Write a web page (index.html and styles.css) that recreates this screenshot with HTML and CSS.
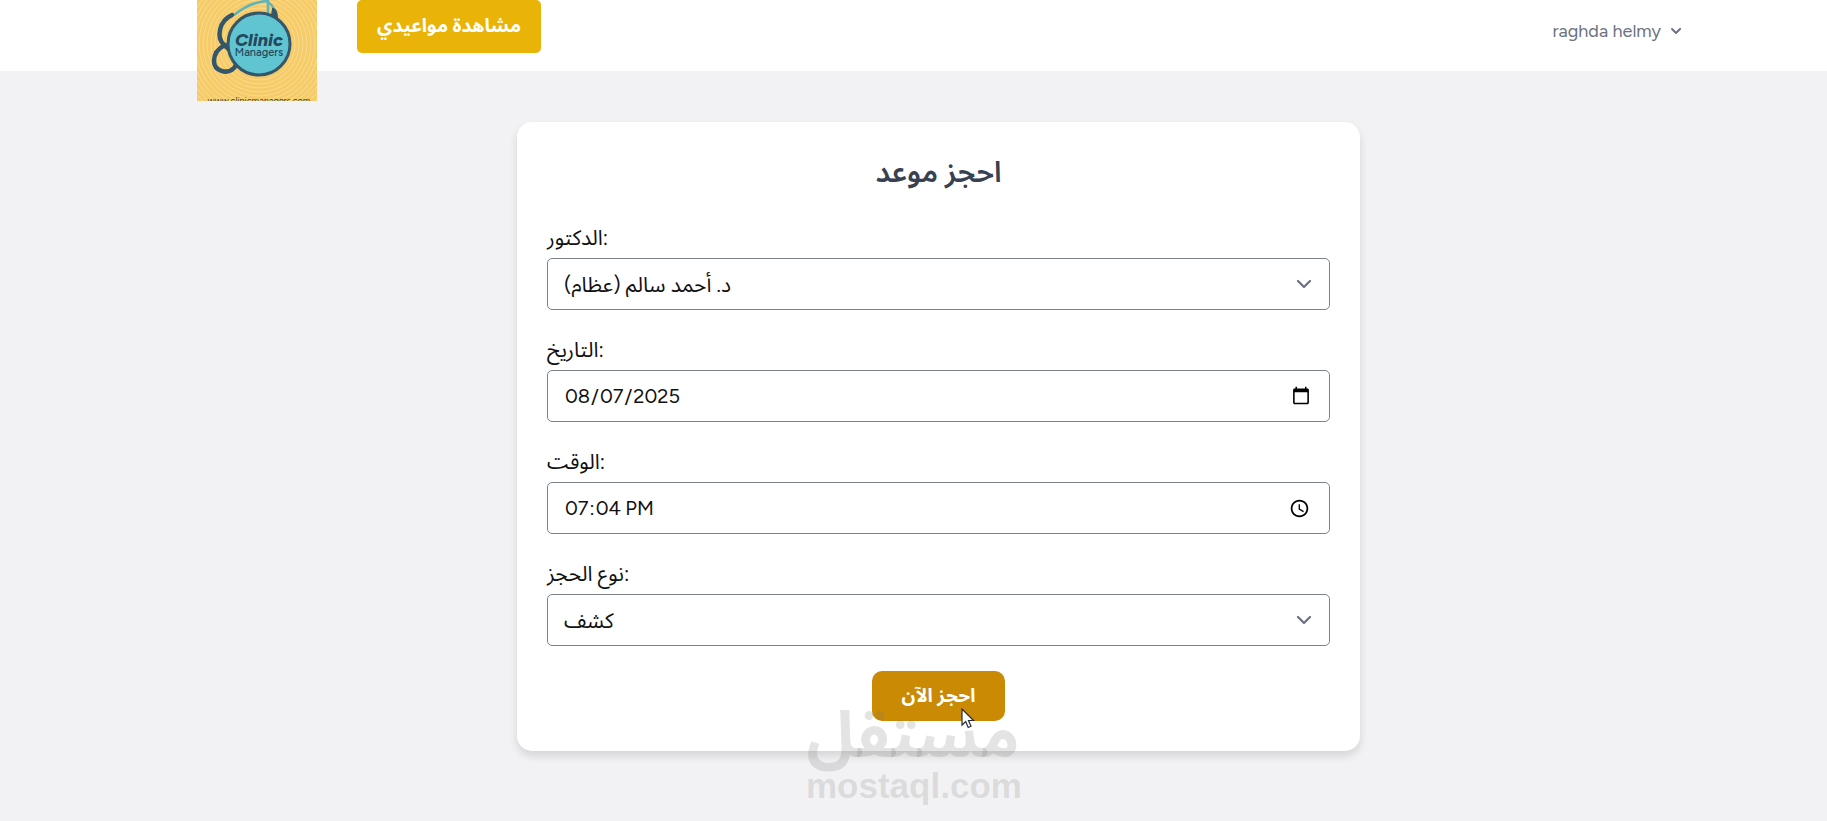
FILE: index.html
```html
<!DOCTYPE html>
<html lang="en">
<head>
  <meta charset="UTF-8">
  <meta name="viewport" content="width=device-width, initial-scale=1.0">
  <title>احجز موعد</title>
  <link rel="stylesheet" href="styles.css">
</head>
<body>
  <nav class="navbar">
    <div class="nav-left">
      <a href="#" class="logo" aria-label="Clinic Managers">
        <svg width="120" height="101" viewBox="0 0 120 101">
          <rect width="120" height="101" fill="#f6cb69"/>
          <g class="rings">
            <circle cx="62" cy="44" r="36"/>
            <circle cx="62" cy="44" r="40"/>
            <circle cx="62" cy="44" r="44"/>
            <circle cx="62" cy="44" r="48"/>
            <circle cx="62" cy="44" r="52"/>
            <circle cx="62" cy="44" r="56"/>
            <circle cx="62" cy="44" r="60"/>
            <circle cx="62" cy="44" r="64"/>
            <circle cx="62" cy="44" r="68"/>
            <circle cx="62" cy="44" r="72"/>
            <circle cx="62" cy="44" r="76"/>
            <circle cx="62" cy="44" r="80"/>
          </g>
          <path d="M37 15C47 7 57 2 69 1Q75 4 78 11M71 0V13" fill="none" stroke="#5fb3bd" stroke-width="2.5"/>
          <path d="M35 15C22 21 19 37 27 45C37 53 42 63 37 68C30 75 17 71 17 61C17 53 22 48 28 45" fill="none" stroke="#34566a" stroke-width="4.5" stroke-linecap="round"/>
          <path d="M75 15L76 9Q80 10 80 18Z" fill="#34566a" stroke="#34566a" stroke-width="2"/>
          <circle cx="62" cy="44" r="31" fill="#60c5d0" stroke="#34566a" stroke-width="3"/>
          <text x="62" y="46" class="logo-name">Clinic</text>
          <text x="62" y="56" class="logo-sub">Managers</text>
          <text x="62" y="104" class="logo-url">www.clinicmanagers.com</text>
        </svg>
      </a>
      <a href="#" class="appointments-btn" lang="ar">مشاهدة مواعيدي</a>
    </div>
    <button type="button" class="user-menu">
      <span>raghda helmy</span>
      <svg width="20" height="20" viewBox="0 0 20 20" fill="currentColor">
        <path d="M5.3 7.3a1 1 0 0 1 1.4 0L10 10.6l3.3-3.3a1 1 0 1 1 1.4 1.4l-4 4a1 1 0 0 1-1.4 0l-4-4a1 1 0 0 1 0-1.4z"/>
      </svg>
    </button>
  </nav>

  <main>
    <form class="booking-card">
      <h2>احجز موعد</h2>

      <div class="form-group">
        <label for="doctor">الدكتور:</label>
        <div class="select-wrap">
          <select id="doctor" name="doctor">
            <option>د. أحمد سالم (عظام)</option>
          </select>
          <svg class="chevron" width="30" height="30" viewBox="0 0 20 20"><path d="M6 8l4 4 4-4"/></svg>
        </div>
      </div>

      <div class="form-group">
        <label for="date">التاريخ:</label>
        <input type="date" id="date" name="date" value="2025-08-07">
      </div>

      <div class="form-group">
        <label for="time">الوقت:</label>
        <input type="time" id="time" name="time" value="19:04">
      </div>

      <div class="form-group">
        <label for="type">نوع الحجز:</label>
        <div class="select-wrap">
          <select id="type" name="type">
            <option>كشف</option>
          </select>
          <svg class="chevron" width="30" height="30" viewBox="0 0 20 20"><path d="M6 8l4 4 4-4"/></svg>
        </div>
      </div>

      <div class="submit-row">
        <button type="submit" class="submit-btn">احجز الآن
          <svg class="pointer" width="14" height="21" viewBox="0 0 14 21">
            <path d="M1 1V17L4.700 13.500L7.200 19.500L10 18.300L7.500 12.500H12.500Z" fill="#fff" stroke="#2b2b3a" stroke-width="1.200"/>
          </svg>
        </button>
      </div>

      <div class="watermark">
        <span class="watermark-ar">مستقل</span>
        <span class="watermark-en">mostaql.com</span>
      </div>
    </form>
  </main>
</body>
</html>
```
FILE: styles.css
```css
* {
  box-sizing: border-box;
}

body {
  font-family: Figtree, Lato, "Noto Sans Arabic", "DejaVu Sans", sans-serif;
  font-size: 20px;
  line-height: 30px;
  margin: 0;
  min-height: 100vh;
  background-color: #f2f2f4;
  color: #111;
}

/* Top bar */
.navbar {
  display: flex;
  justify-content: space-between;
  align-items: flex-start;
  height: 71px;
  padding: 0 141px 0 197px;
  background-color: #fff;
}

.nav-left {
  display: flex;
  align-items: flex-start;
  gap: 40px;
}

.logo,
.logo svg {
  display: block;
}

.rings {
  fill: none;
  stroke: #fbdc8c;
  stroke-width: 1;
}

.logo-name,
.logo-sub,
.logo-url {
  fill: #24485c;
  text-anchor: middle;
}

.logo-name {
  font-size: 18px;
  font-weight: 800;
  font-style: italic;
}

.logo-sub {
  font-size: 11px;
  font-weight: 500;
}

.logo-url {
  font-size: 9px;
}

.appointments-btn {
  padding: 11px 20px 12px;
  border-radius: 5px;
  background-color: #eab308;
  color: #fff;
  font-size: 19px;
  font-weight: 700;
  text-decoration: none;
}

.user-menu {
  display: flex;
  align-items: center;
  gap: 5px;
  height: 62px;
  padding: 0;
  border: none;
  background: none;
  color: #6b7280;
  font-family: inherit;
  font-size: 18px;
}

/* Booking form */
main {
  padding: 51px 0 60px 50px;
}

.booking-card {
  position: relative;
  max-width: 843px;
  margin: 0 auto;
  padding: 30px;
  border-radius: 15px;
  background-color: #fff;
  box-shadow: 0 5px 8px rgba(0, 0, 0, 0.12);
}

.booking-card h2 {
  margin: 0 0 31px;
  color: #374151;
  font-size: 29px;
  font-weight: 600;
  line-height: 40px;
  text-align: center;
}

.form-group {
  margin-bottom: 25px;
}

.form-group label {
  display: block;
  margin-bottom: 5px;
  font-size: 21px;
}

.form-group input,
.form-group select {
  display: block;
  width: 100%;
  height: 52px;
  padding: 10px 16px;
  border: 1px solid #7d838d;
  border-radius: 5px;
  background-color: #fff;
  color: #111;
  font-family: inherit;
  font-size: 20px;
  appearance: none;
}

.form-group select {
  font-size: 21px;
}

.select-wrap {
  position: relative;
}

.chevron {
  position: absolute;
  top: 11px;
  right: 11px;
  fill: none;
  stroke: #6b7280;
  stroke-width: 1.5;
  stroke-linecap: round;
  stroke-linejoin: round;
  pointer-events: none;
}

.submit-row {
  text-align: center;
}

.submit-btn {
  position: relative;
  padding: 10px 30px;
  border: none;
  border-radius: 10px;
  background-color: #ca8a04;
  color: #fff;
  font-family: inherit;
  font-size: 19px;
  font-weight: 700;
  line-height: 30px;
  vertical-align: top;
}

.pointer {
  position: absolute;
  right: 30px;
  bottom: -8px;
}

.watermark {
  position: absolute;
  left: 289px;
  bottom: -53px;
  width: 214px;
  color: rgba(120, 120, 120, 0.2);
  font-weight: 700;
  text-align: center;
  pointer-events: none;
}

.watermark span {
  display: block;
}

.watermark-ar {
  font-size: 64px;
  line-height: 66px;
}

.watermark-en {
  font-family: "Liberation Sans", Arial, sans-serif;
  font-size: 35px;
  line-height: 36px;
}
```
